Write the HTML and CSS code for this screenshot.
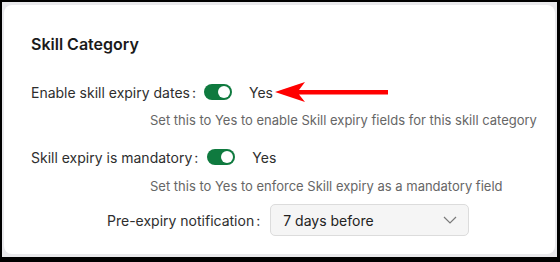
FILE: index.html
```html
<!DOCTYPE html>
<html>
<head>
<meta charset="utf-8">
<link rel="stylesheet" href="styles.css">
</head>
<body>
<div class="frame">
  <div class="card">
    <h2 class="title">Skill Category</h2>
    <div class="row row-1">
      <span class="label">Enable skill expiry dates<span class="colon">:</span></span>
      <span class="toggle"><span class="knob"></span></span>
      <span class="value">Yes</span>
      <svg class="arrow" width="114" height="22" viewBox="0 0 114 22">
        <path d="M0 11 L30 1 L24 9 L113 9 L113 13.5 L24 13.5 L30 21 Z" fill="#ff0000"/>
      </svg>
    </div>
    <div class="help help-1">Set this to Yes to enable Skill expiry fields for this skill category</div>
    <div class="row row-2">
      <span class="label">Skill expiry is mandatory<span class="colon">:</span></span>
      <span class="toggle"><span class="knob"></span></span>
      <span class="value">Yes</span>
    </div>
    <div class="help help-2">Set this to Yes to enforce Skill expiry as a mandatory field</div>
    <div class="row row-3">
      <span class="label">Pre-expiry notification<span class="colon">:</span></span>
      <div class="select">
        <span>7 days before</span>
        <svg class="chev" width="14" height="8" viewBox="0 0 14 8"><path d="M1 1 L7 7 L13 1" fill="none" stroke="#7a7a7a" stroke-width="1.2"/></svg>
      </div>
    </div>
  </div>
</div>
</body>
</html>
```
FILE: styles.css
```css
* { box-sizing: border-box; }
html, body { margin: 0; padding: 0; background: #000; }
body { width: 560px; height: 262px; overflow: hidden; font-family: Inter, "Noto Sans", sans-serif; }
.frame {
  width: 560px; height: 262px;
  border-style: solid; border-color: #000;
  border-width: 2px 3px 5px 2px;
  background: #e9e9ec;
  padding: 3px 2px 3px 2px;
}
.card {
  background: #fff;
  border-radius: 8px;
  height: 100%;
  padding: 29px 0 0 27px;
}
.title {
  margin: 0; height: 20px;
  font-size: 16px; font-weight: 600; color: #1a1a1a;
  line-height: 20px;
}
.row { display: flex; align-items: center; height: 24px; font-size: 14px; color: #2e2e2e; position: relative; }
.row-1 { margin-top: 26px; }
.row-2 { margin-top: 16px; }
.row-3 { margin-top: 9px; height: 32px; padding-left: 76px; }
.label { white-space: nowrap; }
.colon { margin-left: 2px; }
.toggle {
  width: 28px; height: 16px; border-radius: 8px;
  background: #0f7a3f; display: flex; align-items: center; justify-content: flex-end;
  padding-right: 2px;
}
.row-1 .toggle { margin-left: 8px; }
.row-2 .toggle { margin-left: 9px; }
.knob { width: 12px; height: 12px; border-radius: 50%; background: #fff; }
.value { margin-left: 17px; }
.arrow { position: absolute; left: 244px; top: 1px; }
.help { margin-left: 119px; font-size: 13px; color: #666; height: 18px; line-height: 18px; }
.help-1 { margin-top: 7px; }
.help-2 { margin-top: 8px; }
.select {
  margin-left: 10px;
  width: 199px; height: 32px;
  border: 1px solid #dcdcdc; border-radius: 5px;
  background: #f5f5f5;
  display: flex; align-items: center; justify-content: space-between;
  padding: 0 11px 0 12px;
  color: #222;
}
.chev { display: block; }
```
